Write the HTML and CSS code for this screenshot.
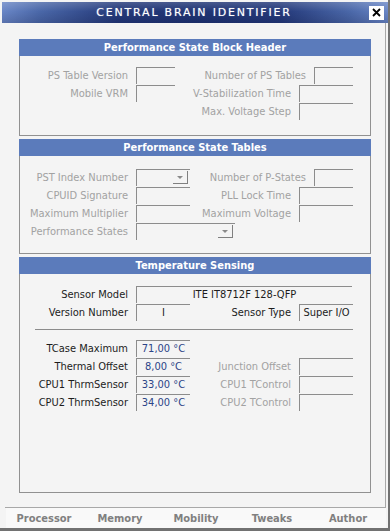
FILE: index.html
```html
<!DOCTYPE html>
<html lang="en">
<head>
    <meta charset="UTF-8">
    <meta name="viewport" content="width=device-width, initial-scale=1.0">
    <title>Central Brain Identifier</title>
    <link rel="stylesheet" href="styles.css">
</head>
<body>
    <div class="window">
        <div class="titlebar">
            <span></span>
            <span class="title">CENTRAL BRAIN IDENTIFIER</span>
            <button class="close" title="Close">
                <svg width="9" height="9" viewBox="0 0 9 9">
                    <path d="M1 1 L8 8 M8 1 L1 8" stroke="#000" stroke-width="1.8" fill="none"/>
                </svg>
            </button>
        </div>

        <div class="content">
            <section class="panel p1">
                <h3 class="panel-head">Performance State Block Header</h3>
                <div class="row">
                    <div class="grp"><span class="lbl off">PS Table Version</span><span class="fld w39"></span></div>
                    <div class="grp right"><span class="lbl off">Number of PS Tables</span><span class="fld w39"></span></div>
                </div>
                <div class="row">
                    <div class="grp"><span class="lbl off">Mobile VRM</span><span class="fld w39"></span></div>
                    <div class="grp right"><span class="lbl off">V-Stabilization Time</span><span class="fld w54"></span></div>
                </div>
                <div class="row">
                    <div class="grp right"><span class="lbl off">Max. Voltage Step</span><span class="fld w54"></span></div>
                </div>
            </section>

            <section class="panel p2">
                <h3 class="panel-head">Performance State Tables</h3>
                <div class="row">
                    <div class="grp"><span class="lbl off">PST Index Number</span><span class="fld w54 combo"><span class="arrow"></span></span></div>
                    <div class="grp right"><span class="lbl off">Number of P-States</span><span class="fld w39"></span></div>
                </div>
                <div class="row">
                    <div class="grp"><span class="lbl off">CPUID Signature</span><span class="fld w54"></span></div>
                    <div class="grp right"><span class="lbl off">PLL Lock Time</span><span class="fld w54"></span></div>
                </div>
                <div class="row">
                    <div class="grp"><span class="lbl off">Maximum Multiplier</span><span class="fld w54"></span></div>
                    <div class="grp right"><span class="lbl off">Maximum Voltage</span><span class="fld w54"></span></div>
                </div>
                <div class="row">
                    <div class="grp"><span class="lbl off">Performance States</span><span class="fld w99 combo"><span class="arrow"></span></span></div>
                </div>
            </section>

            <section class="panel p3">
                <h3 class="panel-head">Temperature Sensing</h3>
                <div class="row">
                    <div class="grp"><span class="lbl">Sensor Model</span><span class="fld w216 txt">ITE IT8712F 128-QFP</span></div>
                </div>
                <div class="row">
                    <div class="grp"><span class="lbl">Version Number</span><span class="fld w54 txt">I</span></div>
                    <div class="grp right"><span class="lbl">Sensor Type</span><span class="fld w54 txt">Super I/O</span></div>
                </div>
                <div class="sep"></div>
                <div class="row">
                    <div class="grp"><span class="lbl">TCase Maximum</span><span class="fld w54 val">71,00 °C</span></div>
                </div>
                <div class="row">
                    <div class="grp"><span class="lbl">Thermal Offset</span><span class="fld w54 val">8,00 °C</span></div>
                    <div class="grp right"><span class="lbl off">Junction Offset</span><span class="fld w54"></span></div>
                </div>
                <div class="row">
                    <div class="grp"><span class="lbl">CPU1 ThrmSensor</span><span class="fld w54 val">33,00 °C</span></div>
                    <div class="grp right"><span class="lbl off">CPU1 TControl</span><span class="fld w54"></span></div>
                </div>
                <div class="row">
                    <div class="grp"><span class="lbl">CPU2 ThrmSensor</span><span class="fld w54 val">34,00 °C</span></div>
                    <div class="grp right"><span class="lbl off">CPU2 TControl</span><span class="fld w54"></span></div>
                </div>
            </section>
        </div>

        <nav class="tabs">
            <span>Processor</span>
            <span>Memory</span>
            <span>Mobility</span>
            <span>Tweaks</span>
            <span>Author</span>
        </nav>
    </div>
</body>
</html>
```

FILE: styles.css
```css
* {
    box-sizing: border-box;
    margin: 0;
    padding: 0;
}

body {
    font-family: "DejaVu Sans Condensed", "DejaVu Sans", sans-serif;
    font-size: 11px;
    background-color: #f4f4f4;
    overflow: hidden;
}

.window {
    width: 390px;
    height: 531px;
    display: flex;
    flex-direction: column;
    padding-top: 2px;
    border-right: 2px solid #727272;
    border-bottom: 3px solid #727272;
    background-color: #f4f4f4;
}

/* barra de título */
.titlebar {
    height: 21px;
    margin-left: 2px;
    padding-right: 4px;
    display: grid;
    grid-template-columns: 1fr auto 1fr;
    align-items: center;
    background:
        linear-gradient(to bottom, rgba(255, 255, 255, 0.18), rgba(255, 255, 255, 0) 45%, rgba(0, 0, 30, 0.15)),
        linear-gradient(to right, #6986c6 0%, #4a67a8 10%, #24397a 30%, #1f3474 50%, #24397a 72%, #4a67a8 90%, #6986c6 100%);
}

.title {
    color: #fff;
    font-family: "DejaVu Sans", sans-serif;
    font-size: 11px;
    letter-spacing: 1.8px;
    text-shadow: 0 0 1px rgba(255, 255, 255, 0.5);
    padding-left: 2px;
}

.close {
    justify-self: end;
    width: 15px;
    height: 14px;
    border: none;
    background-color: #fff;
    display: flex;
    justify-content: center;
    align-items: center;
}

/* área principal */
.content {
    flex: 1;
    margin-left: 5px;
    margin-right: 2px;
    padding: 16px 14px 14px 14px;
    border-right: 1px solid #a8a8a8;
    border-bottom: 1px solid #a8a8a8;
    display: flex;
    flex-direction: column;
    gap: 3px;
}

.panel {
    border: 1px solid #919191;
    padding-right: 17px;
}

.p1 { padding-bottom: 14px; }
.p2 { padding-bottom: 12px; }
.p3 { flex: 1; }

.panel-head {
    height: 17px;
    margin: -1px -18px 11px -1px;
    background-color: #5b7bbb;
    color: #fff;
    font-size: 11px;
    font-weight: bold;
    line-height: 17px;
    text-align: center;
}

.p2 .panel-head { margin-bottom: 13px; }
.p3 .panel-head { margin-bottom: 12px; }

.row {
    height: 18px;
    display: flex;
}

.grp {
    display: flex;
    align-items: flex-start;
}

.grp .lbl {
    width: 116px;
    padding-right: 8px;
    text-align: right;
    line-height: 17px;
    color: #1c1c1c;
    white-space: nowrap;
}

.grp.right {
    margin-left: auto;
}

.grp.right .lbl {
    width: auto;
}

.lbl.off {
    color: #a2a2a2;
}

.fld {
    height: 17px;
    border-top: 1px solid #8c8c8c;
    border-left: 1px solid #8c8c8c;
    line-height: 16px;
    text-align: center;
    color: #1c1c1c;
}

.w39 { width: 39px; }
.w54 { width: 54px; }
.w99 { width: 99px; }
.w216 { width: 216px; }

.fld.val {
    color: #2c4488;
}

.combo {
    display: flex;
    justify-content: flex-end;
    padding: 0 2px 0 0;
}

.arrow {
    width: 15px;
    height: 13px;
    margin-top: 1px;
    border-right: 1px solid #808080;
    border-bottom: 1px solid #808080;
    display: flex;
    justify-content: center;
    align-items: center;
}

.arrow::before {
    content: "";
    border-left: 3px solid transparent;
    border-right: 3px solid transparent;
    border-top: 3px solid #8a8a8a;
}

.sep {
    height: 1px;
    margin: 7px 0 10px 15px;
    background-color: #8c8c8c;
}

/* abas inferiores */
.tabs {
    height: 20px;
    margin-left: 6px;
    margin-right: 2px;
    display: grid;
    grid-template-columns: repeat(5, 1fr);
    align-items: center;
    background-color: #f9f9f9;
}

.tabs span {
    text-align: center;
    font-weight: bold;
    color: #808080;
}
```
